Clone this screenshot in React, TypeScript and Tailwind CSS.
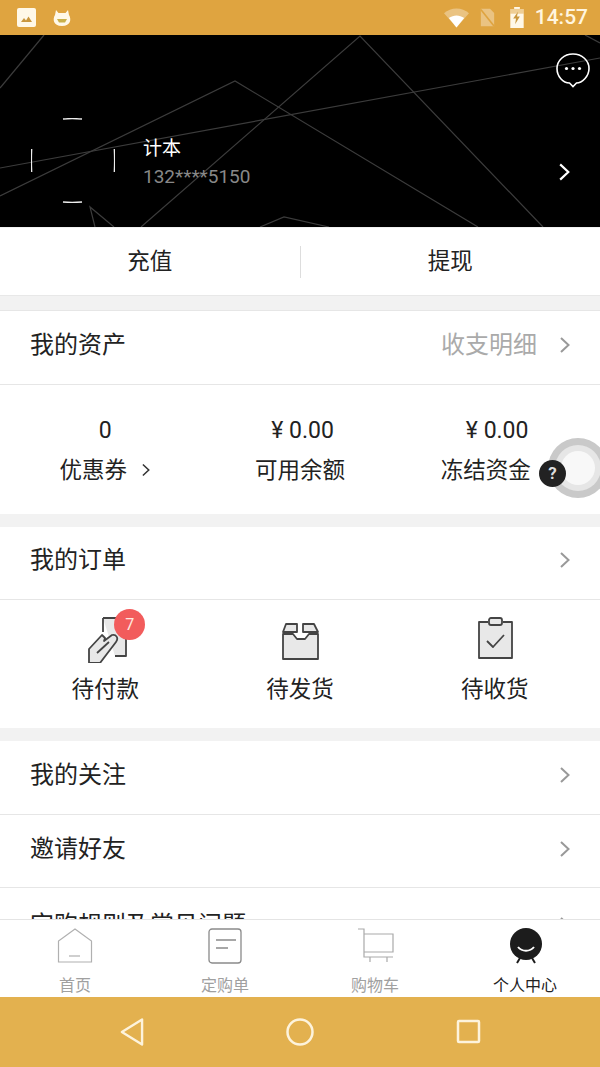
import { ReactNode } from "react";

const cjk = "font-['Roboto','Noto_Sans_CJK_SC',sans-serif]";

function Chevron({ className = "" }: { className?: string }) {
  return (
    <svg width="12" height="18" viewBox="0 0 12 18" fill="none" className={className}>
      <path d="M2 2l7.500 7L2 16" stroke="currentColor" strokeWidth="2" />
    </svg>
  );
}

function Row({ title, right, className = "h-[73px] pb-[6px]" }: { title: string; right?: ReactNode; className?: string }) {
  return (
    <div className={`flex shrink-0 items-center justify-between bg-white pl-[30px] pr-[29px] ${className}`}>
      <span className="text-[24px] leading-none text-[#222]">{title}</span>
      <div className="flex items-center gap-[22px]">
        {right}
        <Chevron className="text-[#999]" />
      </div>
    </div>
  );
}

function StatusBar() {
  return (
    <div className="flex h-[35px] shrink-0 items-center justify-between bg-[#dfa440] pl-[17px] pr-[12px]">
      <div className="flex items-center gap-[16px]">
        <svg width="19" height="19" viewBox="0 0 19 19">
          <rect width="19" height="19" rx="2" fill="#fff8e8" />
          <path d="M4 14l3-4 2 2.500 2.500-4 3.500 5.500z" fill="#c9973f" />
        </svg>
        <svg width="20" height="18" viewBox="0 0 20 18">
          <path d="M4 1l2.500 3h7L16 1l1 5c2.500 4 2 11-7 11S.5 10 3 6z" fill="#fff8e8" />
          <path d="M5 10h10l-2 3.500H7z" fill="#c9b04a" />
        </svg>
      </div>
      <div className="flex items-center">
        <svg width="25" height="20" viewBox="0 0 26 20" className="mr-[11px]">
          <path d="M0 5c7-6.500 19-6.500 26 0L13 20z" fill="#fff" fillOpacity=".35" />
          <path d="M5 10c5-3.500 11-3.500 16 0l-8 10z" fill="#fff" />
        </svg>
        <svg width="15" height="19" viewBox="0 0 18 21" className="mr-[15px]">
          <path d="M1 0h11l5 5v16H1z" fill="#fff" fillOpacity=".35" />
          <path d="M1 1l16 20" stroke="#dfa440" strokeWidth="2" />
        </svg>
        <svg width="14" height="21" viewBox="0 0 14 22" className="mr-[11px]">
          <path d="M4 0h6v2h4v20H0V2h4z" fill="#fff8e8" />
          <path d="M0 2h14v5H0z" fill="#dfa440" fillOpacity=".5" />
          <path d="M8 5L3 12h3l-1 6 5-8H7z" fill="#c9973f" />
        </svg>
        <span className="font-['Roboto',sans-serif] text-[21px] font-medium leading-none text-[#fff5df]">14:57</span>
      </div>
    </div>
  );
}

function Hero() {
  return (
    <div className="relative flex h-[192px] shrink-0 items-center overflow-hidden bg-black pl-[31px] pr-[29px] pt-[60px]">
      <svg width="600" height="192" viewBox="0 35 600 192" fill="none" className="absolute left-0 top-0" stroke="#3c3c3c" strokeWidth="1.200">
        <path d="M141 227L360 36l183 191" />
        <path d="M0 196L235 81l243 146" />
        <path d="M0 168L600 58" />
        <path d="M44 35L0 88" />
        <path d="M585 35l15 8" />
        <path d="M95 227l-5-20 24 20" />
        <path d="M260 227l24-10 45 10" />
      </svg>
      <svg width="84" height="86" viewBox="0 0 84 86" fill="none" className="relative shrink-0" stroke="#eee" strokeWidth="1.300">
        <path d="M32 1c6-.6 12-.6 19 0" />
        <path d="M32 84c6 .6 12 .6 19 0" />
        <path d="M.700 31c-.4 8-.4 15 0 23" />
        <path d="M83.300 31c.4 8 .4 15 0 23" />
      </svg>
      <div className="relative ml-[28px] mt-[4px] flex flex-col">
        <span className="text-[19px] leading-[26px] text-white">计本</span>
        <span className="mt-[2px] font-['Roboto',sans-serif] text-[19px] leading-[26px] text-[#888]">132****5150</span>
      </div>
      <Chevron className="relative ml-auto mt-[22px] h-[20px] w-[13px] text-white" />
      <svg width="36" height="36" viewBox="0 0 36 36" fill="none" className="absolute right-[9px] top-[17px]">
        <path d="M18 2c9 0 16 6.500 16 14.500S27 31 21.500 31L18 34.500 14.500 31C8 31 2 24.500 2 16.500S9 2 18 2z" stroke="#fff" strokeWidth="1.600" />
        <circle cx="11.500" cy="16.500" r="1.600" fill="#fff" />
        <circle cx="18" cy="16.500" r="1.600" fill="#fff" />
        <circle cx="24.500" cy="16.500" r="1.600" fill="#fff" />
      </svg>
    </div>
  );
}

function Assets() {
  return (
    <div className="relative grid h-[129px] shrink-0 grid-cols-3 bg-white px-[8px] pt-[32px] text-center text-[#222]">
      <div>
        <div className="font-['Roboto',sans-serif] text-[23px] leading-[28px]">0</div>
        <div className="mt-[11px] flex items-center justify-center gap-[14px] text-[22.500px] leading-[28px]">
          优惠券
          <Chevron className="h-[14px] w-[10px] text-[#333]" />
        </div>
      </div>
      <div>
        <div className="pl-[5px] font-['Roboto',sans-serif] text-[23px] leading-[28px]">¥ 0.00</div>
        <div className="mt-[11px] text-[22.500px] leading-[28px]">可用余额</div>
      </div>
      <div>
        <div className="pl-[5px] font-['Roboto',sans-serif] text-[23px] leading-[28px]">¥ 0.00</div>
        <div className="mt-[11px] pr-[18px] text-[22.500px] leading-[28px]">冻结资金</div>
      </div>
      <div className="absolute left-[548px] top-[53px] flex h-[60px] w-[60px] items-center justify-center rounded-full bg-[#c9c9c9]">
        <div className="flex h-[46px] w-[46px] items-center justify-center rounded-full bg-[#e6e6e6]">
          <div className="h-[34px] w-[34px] rounded-full bg-[#f8f8f8]" />
        </div>
      </div>
      <div className="absolute left-[539px] top-[75px] flex h-[27px] w-[27px] items-center justify-center rounded-full bg-[#222] font-['Roboto',sans-serif] text-[17px] font-bold text-[#ddd]">
        ?
      </div>
    </div>
  );
}

function OrderIcon({ children, label }: { children: ReactNode; label: string }) {
  return (
    <div className="flex flex-col items-center">
      <div className="relative h-[50px] w-[60px]">{children}</div>
      <span className="mt-[12px] text-[22.500px] leading-[28px] text-[#222]">{label}</span>
    </div>
  );
}

function Orders() {
  return (
    <div className="grid h-[128px] shrink-0 grid-cols-3 bg-white px-[8px] pt-[13px]">
      <OrderIcon label="待付款">
        <svg width="60" height="50" viewBox="0 0 60 50" fill="#e8e8e8" stroke="#444" strokeWidth="1.800" strokeLinejoin="round">
          <path d="M28 5h23v38H40" />
          <path d="M28 5v14" />
          <path d="M14 50V36l13-14 3 3-1 3 8-6c4-1 7 3 4 7L25 50z" />
          <path d="M22 40l12-11" fill="none" />
        </svg>
        <div className="absolute left-[39px] top-[-4px] flex h-[31px] w-[31px] items-center justify-center rounded-full bg-[#f25c5c] font-['Roboto',sans-serif] text-[16px] text-[#ffe9e0]">
          7
        </div>
      </OrderIcon>
      <OrderIcon label="待发货">
        <svg width="60" height="50" viewBox="0 0 60 50" fill="#e8e8e8" stroke="#444" strokeWidth="1.800" strokeLinejoin="round">
          <path d="M13 21h10l4 5h8l4-5h9v25H13z" />
          <path d="M13 19l3-8h11v8z" />
          <path d="M33 19v-8h11l4 8z" />
        </svg>
      </OrderIcon>
      <OrderIcon label="待收货">
        <svg width="60" height="50" viewBox="0 0 60 50" fill="#e8e8e8" stroke="#444" strokeWidth="1.800" strokeLinejoin="round">
          <path d="M23 9h-9v36h33V9h-9" />
          <rect x="24" y="5" width="13" height="7" rx="2" />
          <path d="M22 28l6 6 11-12" fill="none" />
        </svg>
      </OrderIcon>
    </div>
  );
}

function TabBar() {
  const tabs = [
    {
      label: "首页",
      icon: (
        <g fill="none" stroke="#b0b0b0" strokeWidth="1.200">
          <path d="M3.500 34V13L20 1l16.500 12v21z" />
          <path d="M14 28h11" />
        </g>
      ),
    },
    {
      label: "定购单",
      icon: (
        <g fill="none" stroke="#8a8a8a" strokeWidth="1.300">
          <rect x="4" y="1" width="32" height="34" rx="3" />
          <path d="M11 12h20M11 20h12" />
        </g>
      ),
    },
    {
      label: "购物车",
      icon: (
        <g fill="none" stroke="#aaa" strokeWidth="1.200">
          <path d="M3 1h6v28h29" />
          <path d="M9 6h29v18H9" />
          <path d="M15 29v5M32 29v5" />
        </g>
      ),
    },
    {
      label: "个人中心",
      active: true,
      icon: (
        <g>
          <ellipse cx="21" cy="16" rx="16" ry="16" fill="#1c1c1c" />
          <path d="M15 30l-3 5M27 30l3 5" stroke="#1c1c1c" strokeWidth="2" />
          <path d="M13 19c4 5 12 5 16 0" stroke="#fff" strokeWidth="2" fill="none" />
        </g>
      ),
    },
  ];
  return (
    <div className="relative z-10 grid h-[78px] shrink-0 grid-cols-4 border-t border-[#e4e4e4] bg-white pt-[8px]">
      {tabs.map((t) => (
        <div key={t.label} className="flex flex-col items-center">
          <svg width="40" height="39" viewBox="0 0 40 39">
            {t.icon}
          </svg>
          <span className={`mt-[9px] text-[16px] leading-[20px] ${t.active ? "text-[#222]" : "text-[#a0a0a0]"}`}>{t.label}</span>
        </div>
      ))}
    </div>
  );
}

function NavBar() {
  return (
    <div className="flex h-[70px] shrink-0 items-center justify-between bg-[#e3b14f] pl-[119px] pr-[118px]">
      <svg width="25" height="30" viewBox="0 0 26 30" fill="none" stroke="#fdf3dc" strokeWidth="2.500">
        <path d="M24 2v26L3 15z" strokeLinejoin="round" />
      </svg>
      <svg width="28" height="28" viewBox="0 0 28 28" fill="none" stroke="#fdf3dc" strokeWidth="2.500">
        <circle cx="14" cy="14" r="12.500" />
      </svg>
      <svg width="26" height="26" viewBox="0 0 26 26" fill="none" stroke="#fdf3dc" strokeWidth="2.500">
        <rect x="2" y="2" width="21" height="21" rx="1" />
      </svg>
    </div>
  );
}

export default function App() {
  return (
    <div className={`flex h-[1067px] w-[600px] flex-col overflow-hidden bg-[#f2f2f2] ${cjk}`}>
      <StatusBar />
      <div className="flex min-h-0 flex-1 flex-col overflow-hidden">
        <Hero />
        <div className="mt-px flex h-[68px] shrink-0 items-center border-b border-[#e8e8e8] bg-white pt-px text-[22.500px] text-[#222]">
          <div className="flex-1 text-center">充值</div>
          <div className="h-[32px] w-px bg-[#ddd]" />
          <div className="flex-1 text-center">提现</div>
        </div>
        <div className="mt-[14px] border-y border-[#e6e6e6]">
          <Row title="我的资产" right={<span className="text-[24px] leading-none text-[#aaa]">收支明细</span>} />
        </div>
        <Assets />
        <div className="mt-[13px] border-b border-[#e6e6e6]">
          <Row title="我的订单" className="h-[72px] pb-[6px]" />
        </div>
        <Orders />
        <div className="mt-[13px] border-b border-[#e6e6e6]">
          <Row title="我的关注" />
        </div>
        <div className="border-b border-[#e6e6e6]">
          <Row title="邀请好友" className="h-[72px] pb-[4px]" />
        </div>
        <Row title="定购规则及常见问题" className="h-[73px]" />
      </div>
      <TabBar />
      <NavBar />
    </div>
  );
}
